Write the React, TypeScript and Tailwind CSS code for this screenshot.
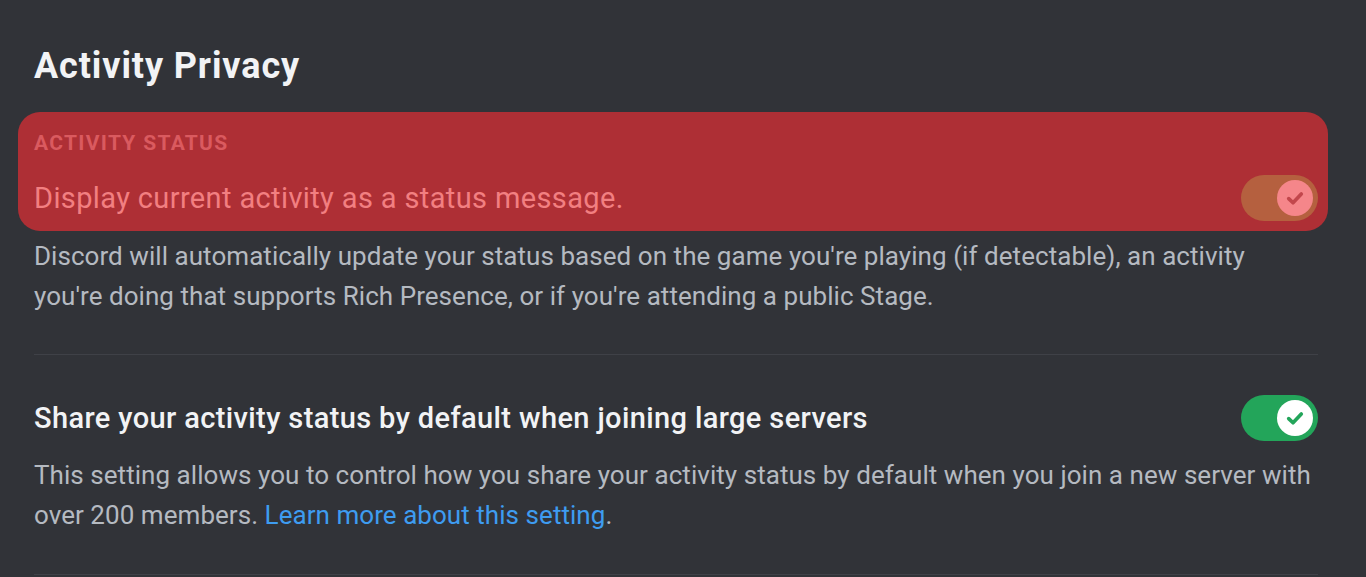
function Toggle({ track, knob, check }: { track: string; knob: string; check: string }) {
  return (
    <div className={`relative w-[77px] h-[46px] rounded-full shrink-0 ${track}`}>
      <div className={`absolute right-[5px] top-[5px] w-[36px] h-[36px] rounded-full flex items-center justify-center ${knob}`}>
        <svg viewBox="0 0 24 24" className="w-[28px] h-[28px]" fill="none">
          <path d="M6.6 12.5l3.7 3.6 7.1-7.5" stroke={check} strokeWidth="3.1" strokeLinecap="round" strokeLinejoin="round" />
        </svg>
      </div>
    </div>
  );
}

export default function App() {
  return (
    <div className="bg-[#313338] w-full min-h-[577px] overflow-hidden font-['Roboto',sans-serif]">
      <div className="w-[1284px] ml-[34px] pt-[46px]">
        <h1 className="text-[36px] leading-[40px] font-bold tracking-[0.9px] text-[#f2f3f5]">Activity Privacy</h1>

        <div className="mt-[26px] ml-[-16px] mr-[-10px] pl-[16px] pr-[10px] pt-[19px] pb-[10px] rounded-[22px] bg-[#ae2f35]">
          <div className="text-[21px] leading-[24px] font-bold uppercase tracking-[1.3px] text-[#da5a5f]">Activity Status</div>
          <div className="mt-[20px] flex items-center justify-between">
            <div className="text-[29px] leading-[46px] text-[#f27f81] tracking-[0.37px]">Display current activity as a status message.</div>
            <Toggle track="bg-[#b5603f]" knob="bg-[#f5868a]" check="#c2474c" />
          </div>
        </div>

        <p className="mt-[5px] text-[26px] leading-[40px] tracking-[0.05px] text-[#b5bac1]">
          Discord will automatically update your status based on the game you're playing (if detectable), an activity
          <br />
          you're doing that supports Rich Presence, or if you're attending a public Stage.
        </p>

        <div className="mt-[38px] h-px bg-[#3f4147]"></div>

        <div className="mt-[40px] flex items-center justify-between">
          <div className="text-[29px] leading-[46px] font-medium text-[#f2f3f5] tracking-[0.38px]">
            Share your activity status by default when joining large servers
          </div>
          <Toggle track="bg-[#23a55a]" knob="bg-white" check="#23a55a" />
        </div>

        <p className="mt-[14px] text-[26px] leading-[40px] tracking-[0.05px] text-[#b5bac1]">
          This setting allows you to control how you share your activity status by default when you join a new server with
          <br />
          over 200 members. <span className="text-[#3e9cf0]">Learn more about this setting</span>.
        </p>

        <div className="mt-[39px] h-px bg-[#3f4147]"></div>
      </div>
    </div>
  );
}
